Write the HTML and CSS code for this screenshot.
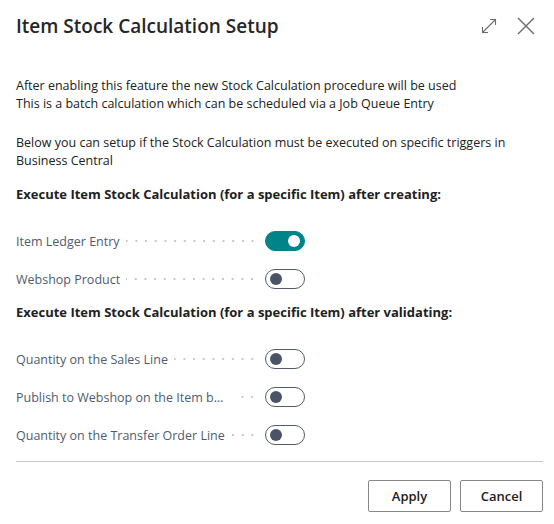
FILE: index.html
```html
<!DOCTYPE html>
<html lang="en">
<head>
    <meta charset="UTF-8">
    <meta name="viewport" content="width=device-width, initial-scale=1.0">
    <title>Item Stock Calculation Setup</title>
    <link rel="stylesheet" href="styles.css">
</head>
<body>

<div class="dialog">
    <div class="dialog-header">
        <h1>Item Stock Calculation Setup</h1>
        <div class="header-actions">
            <button class="icon-btn" title="Expand">
                <svg width="16" height="16" viewBox="0 0 16 16">
                    <path d="M1.5 14.5 L14.5 1.5 M9 1.5 H14.5 V7 M1.5 9 V14.5 H7" fill="none" stroke="#6b6b6b" stroke-width="1.1"/>
                </svg>
            </button>
            <button class="icon-btn" title="Close">
                <svg width="18" height="18" viewBox="0 0 18 18">
                    <path d="M1 1 L17 17 M17 1 L1 17" fill="none" stroke="#6b6b6b" stroke-width="1.4"/>
                </svg>
            </button>
        </div>
    </div>

    <div class="dialog-body">
        <p class="intro">After enabling this feature the new Stock Calculation procedure will be used<br>
        This is a batch calculation which can be scheduled via a Job Queue Entry</p>
        <p class="intro">Below you can setup if the Stock Calculation must be executed on specific triggers in Business Central</p>

        <h2>Execute Item Stock Calculation (for a specific Item) after creating:</h2>
        <div class="field">
            <span class="label">Item Ledger Entry</span>
            <span class="leader"></span>
            <span class="toggle on"></span>
        </div>
        <div class="field">
            <span class="label">Webshop Product</span>
            <span class="leader"></span>
            <span class="toggle"></span>
        </div>

        <h2>Execute Item Stock Calculation (for a specific Item) after validating:</h2>
        <div class="field">
            <span class="label">Quantity on the Sales Line</span>
            <span class="leader"></span>
            <span class="toggle"></span>
        </div>
        <div class="field">
            <span class="label">Publish to Webshop on the Item before</span>
            <span class="leader"></span>
            <span class="toggle"></span>
        </div>
        <div class="field">
            <span class="label">Quantity on the Transfer Order Line</span>
            <span class="leader"></span>
            <span class="toggle"></span>
        </div>
    </div>

    <div class="dialog-footer">
        <button class="btn">Apply</button>
        <button class="btn">Cancel</button>
    </div>
</div>

</body>
</html>
```

FILE: styles.css
```css
body {
    margin: 0;
    background-color: #fff;
    font-family: "Open Sans", "Noto Sans", sans-serif;
    font-size: 12.5px;
    color: #212121;
}
.dialog {
    width: 527px;
    padding-left: 16px;
}
.dialog-header {
    display: flex;
    align-items: center;
    justify-content: space-between;
    height: 52px;
}
h1 {
    margin: 0;
    font-size: 19px;
    font-weight: 600;
    color: #262626;
}
.header-actions {
    display: flex;
    align-items: center;
    gap: 20px;
    margin-right: 8px;
}
.icon-btn {
    background: none;
    border: none;
    padding: 0;
    display: flex;
}
.dialog-body {
    padding-top: 25px;
}
.intro {
    margin: 0 0 21px 0;
    line-height: 18px;
}
.intro + .intro {
    margin-bottom: 15px;
}
h2 {
    margin: 5px 0 0 0;
    font-size: 13px;
    font-weight: 700;
    line-height: 18px;
}
.intro + h2 {
    margin-top: 0;
}
h2 + .field {
    margin-top: 19px;
}
.field {
    display: flex;
    align-items: center;
    width: 289px;
    height: 38px;
}
.label {
    color: #505c6d;
    white-space: nowrap;
    overflow: hidden;
    text-overflow: ellipsis;
    max-width: 214px;
}
.leader {
    flex: 1;
    min-width: 10px;
    height: 2px;
    margin: 0 8px 0 6px;
    background-image: radial-gradient(circle, #c8c8c8 0.8px, transparent 1px);
    background-size: 9.7px 2px;
    background-position: right center;
    background-repeat: repeat-x;
}
.toggle {
    position: relative;
    flex: none;
    width: 40px;
    height: 20px;
    box-sizing: border-box;
    border: 1px solid #505c6d;
    border-radius: 10px;
}
.toggle::after {
    content: "";
    position: absolute;
    top: 3px;
    left: 4px;
    width: 12px;
    height: 12px;
    border-radius: 50%;
    background-color: #4a5468;
}
.toggle.on {
    background-color: #008489;
    border-color: #008489;
}
.toggle.on::after {
    left: auto;
    right: 4px;
    background-color: #fff;
}
.dialog-footer {
    display: flex;
    justify-content: flex-end;
    gap: 9px;
    margin-top: 7px;
    padding-top: 18px;
    border-top: 1px solid #c8c8c8;
}
.btn {
    width: 83px;
    height: 32px;
    background-color: #fff;
    border: 1px solid #8a8886;
    border-radius: 2px;
    font-family: inherit;
    font-size: 13px;
    font-weight: 600;
    color: #212121;
}
```
